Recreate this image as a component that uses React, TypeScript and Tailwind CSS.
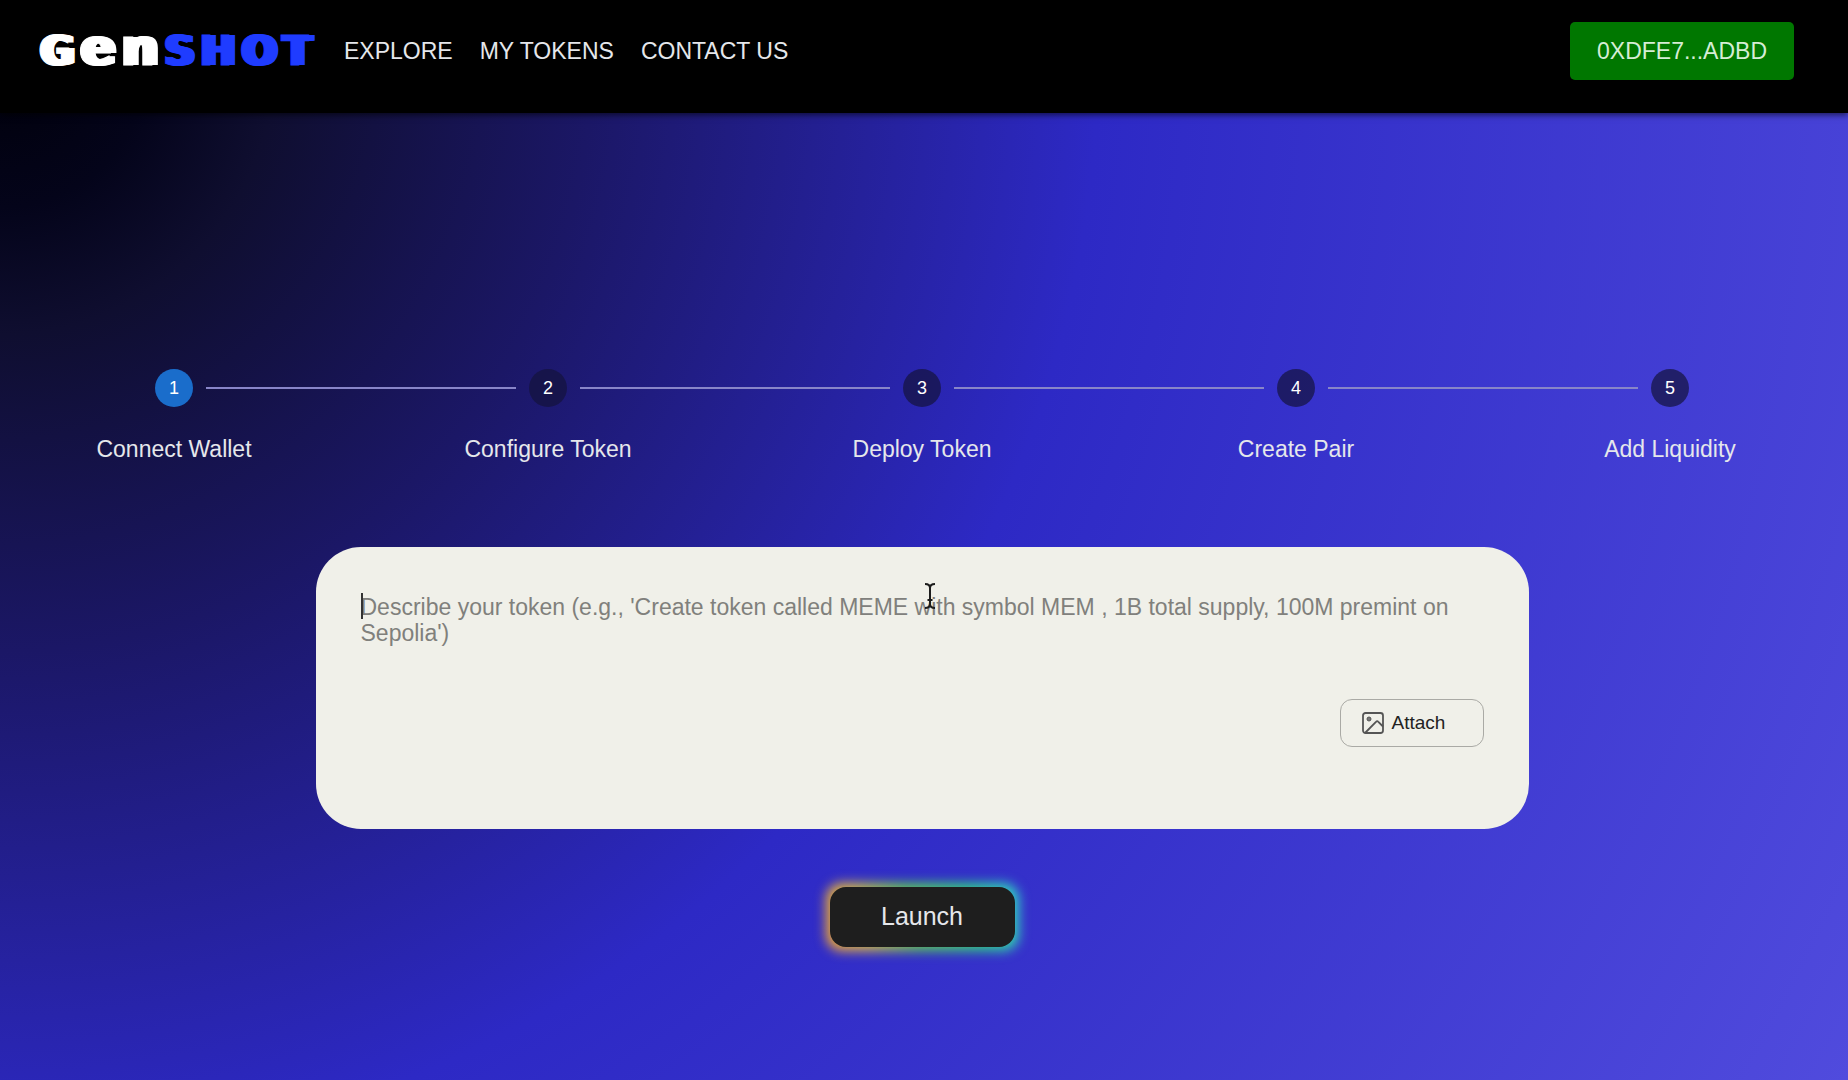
import { useState } from "react";

const steps = ["Connect Wallet", "Configure Token", "Deploy Token", "Create Pair", "Add Liquidity"];

const links = ["EXPLORE", "MY TOKENS", "CONTACT US"];

function Logo() {
  return (
    <a
      href="#home"
      aria-label="Genshot"
      className="flex h-11 w-[278px] items-baseline justify-between pr-[7px] font-['DejaVu_Sans',sans-serif] text-[41px] leading-[40px] font-bold whitespace-nowrap [-webkit-text-stroke:1px] [text-shadow:1px_0_currentColor,2px_0_currentColor,3px_0_currentColor,4px_0_currentColor,5px_0_currentColor,6px_0_currentColor]"
    >
      <span>G</span>
      <span className="text-[51px] leading-[40px]">e</span>
      <span className="text-[51px] leading-[40px]">n</span>
      <span className="text-[#1f3cff]">S</span>
      <span className="text-[#1f3cff]">H</span>
      <span className="text-[#1f3cff]">O</span>
      <span className="text-[#1f3cff]">T</span>
    </a>
  );
}

function ImageIcon() {
  return (
    <svg width="22" height="22" viewBox="0 0 22 22" fill="none" stroke="#555" strokeWidth="1.8" aria-hidden="true">
      <rect x="1" y="1" width="20" height="20" rx="2.5" />
      <circle cx="7" cy="7" r="2" fill="#777" strokeWidth="1" />
      <path d="M3.500 20.500 14.200 9.600a1.300 1.300 0 0 1 1.900 0L21 14.500" />
    </svg>
  );
}

function TextCursor() {
  return (
    <svg width="12" height="28" viewBox="0 0 12 28" fill="none" aria-hidden="true">
      <path d="M1 2c3 0 5 1 5 4v16c0 3-2 4-5 4M11 2c-3 0-5 1-5 4M11 26c-3 0-5-1-5-4M3.500 18h5" stroke="#1c1c1c" strokeWidth="2" />
    </svg>
  );
}

export default function App() {
  const [text, setText] = useState("");
  return (
    <div className="flex min-h-screen flex-col bg-[radial-gradient(circle_farthest-corner_at_0_60px,#00000a_0%,#04041a_7%,#0f0e30_13%,#1b1766_28%,#2d29c5_52%,#504bdd_100%)] font-['Liberation_Sans',Arial,sans-serif] text-white">
      <header className="relative flex h-[113px] items-start justify-between bg-black pr-[54px] pl-[38px] shadow-[0_2px_6px_rgba(0,0,0,0.6)]">
        <div className="flex items-start gap-7 pt-7">
          <Logo />
          <nav className="flex gap-[27px] text-[23px] leading-[46px] text-gray-200">
            {links.map((l) => (
              <a key={l} href={"#" + l.toLowerCase().replace(" ", "-")}>{l}</a>
            ))}
          </nav>
        </div>
        <button type="button" className="mt-[22px] h-[58px] rounded-[5px] bg-[#007700] px-[27px] text-[23px] text-[#d5edd5]">
          0XDFE7...ADBD
        </button>
      </header>

      <main className="flex flex-1 flex-col items-center overflow-x-hidden">
        <ol className="-mr-[9px] -ml-[13px] mt-[256px] grid grid-cols-5 self-stretch">
          {steps.map((label, i) => (
            <li key={label} className="relative flex flex-col items-center gap-[26px]">
              {i > 0 && <span className="absolute top-[18px] right-[calc(50%+32px)] left-[calc(-50%+32px)] h-0.5 bg-[#8885c8]" />}
              <span className={i === 0 ? "flex size-[38px] items-center justify-center rounded-full bg-[#1a6dcb] text-lg" : "flex size-[38px] items-center justify-center rounded-full bg-[#14123c]/70 text-lg"}>
                {i + 1}
              </span>
              <span className="text-[23px] leading-8 text-gray-200">{label}</span>
            </li>
          ))}
        </ol>

        <div className="relative mt-[82px] mr-1 flex h-[282px] w-[1213px] max-w-full flex-col rounded-[45px] bg-[#f0f0e9] px-[45px] pt-[47px]">
          <textarea
            aria-label="Describe your token"
            value={text}
            onChange={(e) => setText(e.target.value)}
            placeholder="Describe your token (e.g., 'Create token called MEME with symbol MEM , 1B total supply, 100M premint on Sepolia')"
            className="h-[105px] w-full resize-none bg-transparent text-[23px] leading-[26px] text-black outline-none placeholder:text-[#80807c]"
          />
          <span className="absolute top-[46px] left-[45px] h-[26px] w-0.5 bg-[#333]" />
          <span className="absolute top-[35px] left-[608px]"><TextCursor /></span>
          <button type="button" className="flex h-12 w-36 items-center gap-2 self-end rounded-xl border border-[#aaaaa5] pl-[21px] text-[19px] text-[#222]">
            <ImageIcon />
            Attach
          </button>
        </div>

        <div className="relative mt-[58px] mr-1">
          <span className="absolute -inset-1 rounded-2xl bg-[linear-gradient(75deg,#f0a030_0%,#d8b840_20%,#60c850_45%,#30d080_75%,#30d0d0_100%)] blur-[6px]" />
          <button type="button" className="relative h-[60px] w-[185px] rounded-2xl bg-[#1e1e1e] text-[25px] text-gray-200">
            Launch
          </button>
        </div>
      </main>
    </div>
  );
}
